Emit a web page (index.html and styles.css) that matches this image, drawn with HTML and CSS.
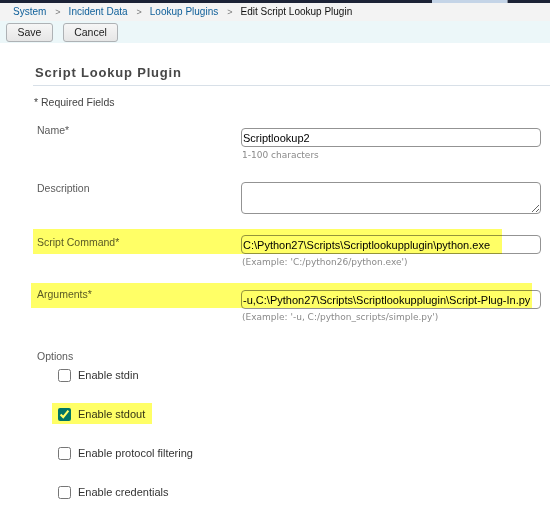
FILE: index.html
```html
<!DOCTYPE html>
<html>
<head>
<meta charset="utf-8">
<link rel="stylesheet" href="styles.css">
</head>
<body>
<div class="page">
  <div class="topbar"><div class="topbar-tab"></div></div>
  <div class="crumbs">
    <a class="crumb">System</a><span class="sep">&gt;</span>
    <a class="crumb">Incident Data</a><span class="sep">&gt;</span>
    <a class="crumb">Lookup Plugins</a><span class="sep">&gt;</span>
    <span class="crumb-current">Edit Script Lookup Plugin</span>
  </div>
  <div class="toolbar">
    <button class="btn btn-save">Save</button>
    <button class="btn btn-cancel">Cancel</button>
  </div>
  <div class="main">
    <h1 class="title">Script Lookup Plugin</h1>
    <div class="required">* Required Fields</div>

    <div class="row row-name">
      <div class="label">Name*</div>
      <div class="field field-name">
        <input class="text" type="text" value="Scriptlookup2">
        <div class="hint">1-100 characters</div>
      </div>
    </div>

    <div class="row row-desc">
      <div class="label">Description</div>
      <div class="field field-desc">
        <textarea class="area"></textarea>
      </div>
    </div>

    <div class="row row-cmd">
      <div class="label">Script Command*</div>
      <div class="field field-cmd">
        <input class="text" type="text" value="C:\Python27\Scripts\Scriptlookupplugin\python.exe">
        <div class="hint">(Example: 'C:/python26/python.exe')</div>
      </div>
    </div>

    <div class="row row-args">
      <div class="label">Arguments*</div>
      <div class="field field-args">
        <input class="text" type="text" value="-u,C:\Python27\Scripts\Scriptlookupplugin\Script-Plug-In.py">
        <div class="hint">(Example: '-u, C:/python_scripts/simple.py')</div>
      </div>
    </div>

    <div class="options-label">Options</div>
    <div class="opt opt-first"><input type="checkbox" class="cb"><span class="opt-text">Enable stdin</span></div>
    <div class="opt"><input type="checkbox" class="cb" checked><span class="opt-text">Enable stdout</span></div>
    <div class="opt"><input type="checkbox" class="cb"><span class="opt-text">Enable protocol filtering</span></div>
    <div class="opt"><input type="checkbox" class="cb"><span class="opt-text">Enable credentials</span></div>
  </div>

  <div class="hl hl-cmd"></div>
  <div class="hl hl-args"></div>
  <div class="hl hl-stdout"></div>
</div>
</body>
</html>
```
FILE: styles.css
```css
html, body {
  margin: 0;
  padding: 0;
  background: #ffffff;
}
body {
  font-family: "Liberation Sans", Arial, sans-serif;
  width: 550px;
  height: 520px;
  overflow: hidden;
}
.page {
  position: relative;
  width: 550px;
  height: 520px;
}
.topbar {
  height: 3px;
  background: #1b2236;
  display: flex;
  padding-left: 432px;
}
.topbar-tab {
  width: 75px;
  height: 3px;
  background: #c4d4e7;
  border-right: 1px solid #8a8f99;
}
.crumbs {
  height: 18px;
  background: #f3f3f3;
  padding-left: 13px;
  display: flex;
  align-items: center;
  font-size: 10px;
  line-height: 18px;
}
.crumb {
  color: #10609a;
  text-decoration: none;
}
.sep {
  color: #7a7a7a;
  font-size: 9px;
  margin: 0 8px 0 9px;
}
.crumb-current {
  color: #111;
}
.toolbar {
  height: 22px;
  background: #ecf7f9;
  display: flex;
  align-items: flex-start;
  padding: 2px 0 0 6px;
  box-sizing: border-box;
  gap: 10px;
}
.btn {
  height: 19px;
  padding: 0;
  margin: 0;
  border: 1px solid #aeb2b5;
  border-radius: 3px;
  background: linear-gradient(#f6f6f6, #e6e6e6);
  font-family: "Liberation Sans", Arial, sans-serif;
  font-size: 10.5px;
  color: #222;
  line-height: 17px;
}
.btn-save { width: 47px; }
.btn-cancel { width: 55px; }

.main {
  padding-left: 33px;
  display: flex;
  flex-direction: column;
}
.title {
  margin: 22px 0 0 0;
  font-size: 13px;
  font-weight: bold;
  letter-spacing: 0.8px;
  line-height: 16px;
  color: #474747;
  padding: 0 0 4px 2px;
  border-bottom: 1px solid #d8e0e8;
}
.required {
  margin-top: 9px;
  padding-left: 1px;
  font-size: 10.5px;
  line-height: 14px;
  color: #444;
}
.row {
  display: flex;
}
.label {
  width: 204px;
  padding-left: 4px;
  font-size: 10.5px;
  line-height: 14px;
  color: #5a5a5a;
}
.field {
  display: flex;
  flex-direction: column;
}
.row-name { margin-top: 14px; }
.field-name { padding-top: 5px; }
.row-desc { margin-top: 20px; }
.field-desc { padding-top: 1px; }
.row-cmd { margin-top: 21px; }
.field-cmd { padding-top: 0; }
.row-args { margin-top: 19px; }
.field-args { padding-top: 3px; }

.text {
  box-sizing: border-box;
  width: 300px;
  height: 19px;
  margin: 0;
  padding: 0 0 0 1px;
  border: 1px solid #939393;
  border-radius: 4px;
  background: #fff;
  font-family: "Liberation Sans", Arial, sans-serif;
  font-size: 11px;
  color: #000;
  outline: none;
}
.area {
  box-sizing: border-box;
  width: 300px;
  height: 32px;
  margin: 0;
  padding: 1px;
  border: 1px solid #939393;
  border-radius: 4px;
  background: #fff;
  font-family: "Liberation Sans", Arial, sans-serif;
  font-size: 11px;
  display: block;
}
.hint {
  margin-top: 2px;
  padding-left: 1px;
  font-family: "DejaVu Sans", Verdana, sans-serif;
  font-size: 9px;
  line-height: 12px;
  color: #8a8a8a;
}
.options-label {
  margin-top: 26px;
  padding-left: 4px;
  font-size: 10.5px;
  line-height: 14px;
  color: #5a5a5a;
}
.opt {
  display: flex;
  align-items: center;
  height: 18px;
  margin-top: 21px;
  padding-left: 25px;
}
.opt-first { margin-top: 3px; }
.cb {
  width: 13px;
  height: 13px;
  margin: 0 7px 0 0;
}
.opt-text {
  font-size: 11px;
  color: #333;
}

.hl {
  position: absolute;
  background: #ffff66;
  mix-blend-mode: multiply;
}
.hl-cmd { left: 33px; top: 229px; width: 469px; height: 25px; }
.hl-args { left: 31px; top: 283px; width: 501px; height: 25px; }
.hl-stdout { left: 52px; top: 403px; width: 100px; height: 21px; }
```
